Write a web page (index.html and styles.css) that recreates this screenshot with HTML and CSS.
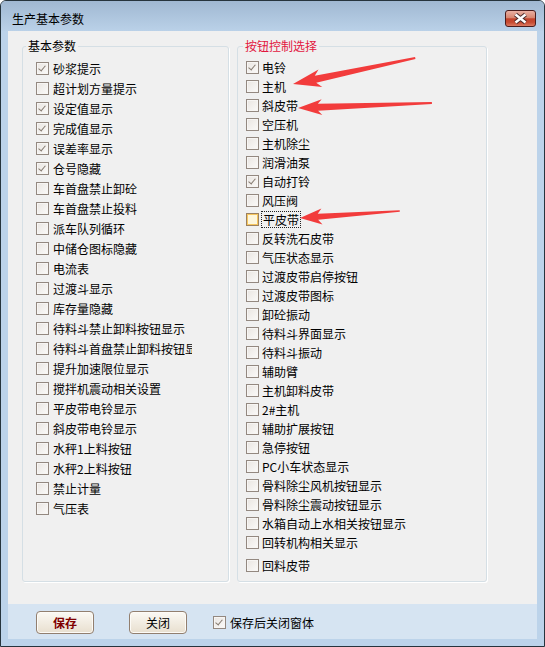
FILE: index.html
```html
<!DOCTYPE html>
<html lang="zh-CN">
<head>
    <meta charset="UTF-8">
    <title>生产基本参数</title>
    <link rel="stylesheet" href="styles.css">
</head>
<body>
    <div class="window">
        <div class="titlebar">
            <div class="title">生产基本参数</div>
            <div class="close-btn">
                <svg width="29" height="15" viewBox="0 0 29 15">
                    <path class="x-shadow" d="M9.5 3.5 L19.5 11.5 M19.5 3.5 L9.5 11.5"/>
                    <path class="x-mark" d="M9.5 3.5 L19.5 11.5 M19.5 3.5 L9.5 11.5"/>
                </svg>
            </div>
        </div>

        <div class="client">
            <div class="main">
                <fieldset class="group group-left">
                    <legend>基本参数</legend>
                    <div class="list list-left">
                        <label class="check"><span class="box on"></span>砂浆提示</label>
                        <label class="check"><span class="box"></span>超计划方量提示</label>
                        <label class="check"><span class="box on"></span>设定值显示</label>
                        <label class="check"><span class="box on"></span>完成值显示</label>
                        <label class="check"><span class="box on"></span>误差率显示</label>
                        <label class="check"><span class="box on"></span>仓号隐藏</label>
                        <label class="check"><span class="box"></span>车首盘禁止卸砼</label>
                        <label class="check"><span class="box"></span>车首盘禁止投料</label>
                        <label class="check"><span class="box"></span>派车队列循环</label>
                        <label class="check"><span class="box"></span>中储仓图标隐藏</label>
                        <label class="check"><span class="box"></span>电流表</label>
                        <label class="check"><span class="box"></span>过渡斗显示</label>
                        <label class="check"><span class="box"></span>库存量隐藏</label>
                        <label class="check"><span class="box"></span>待料斗禁止卸料按钮显示</label>
                        <label class="check"><span class="box"></span>待料斗首盘禁止卸料按钮显示</label>
                        <label class="check"><span class="box"></span>提升加速限位显示</label>
                        <label class="check"><span class="box"></span>搅拌机震动相关设置</label>
                        <label class="check"><span class="box"></span>平皮带电铃显示</label>
                        <label class="check"><span class="box"></span>斜皮带电铃显示</label>
                        <label class="check"><span class="box"></span>水秤1上料按钮</label>
                        <label class="check"><span class="box"></span>水秤2上料按钮</label>
                        <label class="check"><span class="box"></span>禁止计量</label>
                        <label class="check"><span class="box"></span>气压表</label>
                    </div>
                </fieldset>

                <fieldset class="group group-right">
                    <legend class="red">按钮控制选择</legend>
                    <div class="list list-right">
                        <label class="check"><span class="box on"></span>电铃</label>
                        <label class="check"><span class="box"></span>主机</label>
                        <label class="check"><span class="box"></span>斜皮带</label>
                        <label class="check"><span class="box"></span>空压机</label>
                        <label class="check"><span class="box"></span>主机除尘</label>
                        <label class="check"><span class="box"></span>润滑油泵</label>
                        <label class="check"><span class="box on"></span>自动打铃</label>
                        <label class="check"><span class="box"></span>风压阀</label>
                        <label class="check"><span class="box hot"></span><span class="focus-text">平皮带</span></label>
                        <label class="check"><span class="box"></span>反转洗石皮带</label>
                        <label class="check"><span class="box"></span>气压状态显示</label>
                        <label class="check"><span class="box"></span>过渡皮带启停按钮</label>
                        <label class="check"><span class="box"></span>过渡皮带图标</label>
                        <label class="check"><span class="box"></span>卸砼振动</label>
                        <label class="check"><span class="box"></span>待料斗界面显示</label>
                        <label class="check"><span class="box"></span>待料斗振动</label>
                        <label class="check"><span class="box"></span>辅助臂</label>
                        <label class="check"><span class="box"></span>主机卸料皮带</label>
                        <label class="check"><span class="box"></span>2#主机</label>
                        <label class="check"><span class="box"></span>辅助扩展按钮</label>
                        <label class="check"><span class="box"></span>急停按钮</label>
                        <label class="check"><span class="box"></span>PC小车状态显示</label>
                        <label class="check"><span class="box"></span>骨料除尘风机按钮显示</label>
                        <label class="check"><span class="box"></span>骨料除尘震动按钮显示</label>
                        <label class="check"><span class="box"></span>水箱自动上水相关按钮显示</label>
                        <label class="check"><span class="box"></span>回转机构相关显示</label>
                        <label class="check spaced"><span class="box"></span>回料皮带</label>
                    </div>
                </fieldset>
            </div>

            <div class="footer">
                <button class="btn btn-save">保存</button>
                <button class="btn btn-close">关闭</button>
                <label class="check"><span class="box on"></span>保存后关闭窗体</label>
            </div>
        </div>
    </div>

    <!-- red annotation arrows drawn over the dialog -->
    <svg class="marks" width="545" height="647" viewBox="0 0 545 647">
        <g transform="translate(293 84) rotate(-12)">
            <polygon points="0,0 28,-9 23,-3.5 125,-1 125,1 23,3.5 28,9"/>
        </g>
        <g transform="translate(298 108) rotate(-2.1)">
            <polygon points="0,0 24,-8 20,-3.5 134,-1 134,1 20,3.5 24,8"/>
        </g>
        <g transform="translate(300 218) rotate(-4)">
            <polygon points="0,0 22,-8 18,-3 100,-0.8 100,0.8 18,3 22,8"/>
        </g>
    </svg>
</body>
</html>
```

FILE: styles.css
```css
body {
    margin: 0;
    font-family: "Noto Sans CJK SC", "Liberation Sans", sans-serif;
    font-size: 12px;
    color: #000;
    background: #fff;
}

.window {
    width: 545px;
    height: 647px;
    box-sizing: border-box;
    border: 1px solid #26343d;
    border-radius: 6px 6px 0 0;
    background: #bcd3ea;
    display: flex;
    flex-direction: column;
}

.titlebar {
    height: 30px;
    flex: none;
    display: flex;
    align-items: flex-start;
    justify-content: space-between;
    background: linear-gradient(#a0b8d2, #bad1e8);
    border-radius: 5px 5px 0 0;
}

.title {
    margin: 10px 0 0 11px;
    line-height: 16px;
}

.close-btn {
    margin: 9px 8px 0 0;
    width: 31px;
    height: 17px;
    box-sizing: border-box;
    border: 1px solid #4a1c1c;
    border-radius: 3px;
    background: linear-gradient(#eab0a3 0%, #d88670 45%, #c2432c 52%, #c64a31 75%, #dc7a62 100%);
}

.close-btn svg {
    display: block;
}

.x-shadow {
    stroke: #4a2b2b;
    stroke-width: 4.4;
    fill: none;
}

.x-mark {
    stroke: #fff;
    stroke-width: 2.4;
    fill: none;
}

.client {
    flex: 1;
    margin: 0 7px 7px;
    display: flex;
    flex-direction: column;
    background: #f0f0f0;
}

.main {
    flex: 1;
    display: flex;
    gap: 8px;
    padding: 7px 0 22px 14px;
}

.group {
    margin: 0;
    padding: 4px 0 0 3px;
    border: 1px solid #d5dfe5;
    border-radius: 3px;
    box-shadow: 1px 1px 0 #fff;
    box-sizing: border-box;
    min-width: 0;
}

.group-left {
    width: 207px;
}

.group-right {
    width: 250px;
}

legend {
    padding: 0 2px;
    line-height: 16px;
}

legend.red {
    color: #e2163f;
    margin-left: 2px;
}

.list-left {
    padding-left: 10px;
}

.list-right {
    padding-left: 5px;
}

.check {
    display: flex;
    align-items: center;
    gap: 4px;
    white-space: nowrap;
    overflow: hidden;
}

.list-left .check {
    width: 156px;
    height: 20px;
}

.list-right .check {
    height: 19px;
    gap: 3px;
}

.list-right .spaced {
    margin-top: 4px;
}

.box {
    position: relative;
    flex: none;
    width: 13px;
    height: 13px;
    box-sizing: border-box;
    border: 1px solid #938880;
    background: linear-gradient(135deg, #e9e5e1, #fbfaf9);
    box-shadow: inset 0 0 0 1px #f7f5f3;
}

.box.on::after {
    content: "";
    position: absolute;
    left: 3px;
    top: 1px;
    width: 3px;
    height: 6px;
    border: solid #867b71;
    border-width: 0 1.5px 1.5px 0;
    transform: rotate(40deg);
}

.box.hot {
    border-color: #9a8060;
    background: #fdf6dc;
    box-shadow: inset 0 0 0 1px #f6c65f;
}

.focus-text {
    outline: 1px dotted #222;
    outline-offset: 0;
    padding: 0 1px;
    line-height: 15px;
}

.footer {
    height: 35px;
    flex: none;
    box-sizing: border-box;
    display: flex;
    align-items: center;
    padding: 2px 0 0 28px;
    background: #d6e4f2;
}

.btn {
    width: 58px;
    height: 23px;
    box-sizing: border-box;
    padding: 0;
    border: 1px solid #927f6f;
    border-radius: 4px;
    background: linear-gradient(#fbf9f4, #e8dfcf);
    box-shadow: inset 0 0 0 1px #fdfbf7;
    font-family: inherit;
    font-size: 12px;
    color: #000;
}

.btn-save {
    color: #800000;
    font-weight: bold;
    margin-right: 35px;
}

.btn-close {
    margin-right: 26px;
}

.marks {
    position: absolute;
    left: 0;
    top: 0;
    pointer-events: none;
}

.marks polygon {
    fill: #f23c3c;
}
```
